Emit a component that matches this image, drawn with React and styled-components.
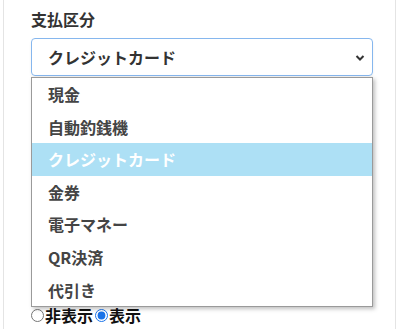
import React, { useState } from "react";
import styled, { createGlobalStyle } from "styled-components";

const GlobalStyle = createGlobalStyle`
  body {
    margin: 0;
    background: #fff;
    font-family: "Noto Sans CJK JP", "Noto Sans", sans-serif;
  }
`;

const Card = styled.div`
  position: relative;
  margin: 0 4px 0 3px;
  padding: 7px 0 0 27px;
  border: 1px solid #e4e4e4;
  border-top: none;
  border-bottom: none;
  height: 100vh;
  overflow: hidden;
  box-sizing: border-box;
`;

const Label = styled.div`
  font-size: 16px;
  font-weight: 700;
  color: #333;
  line-height: 24px;
  margin-bottom: 7px;
`;

const SelectBox = styled.div`
  position: relative;
  width: 342px;
  height: 38px;
  box-sizing: border-box;
  border: 1px solid #86b7ee;
  border-radius: 4px;
  padding-left: 16px;
  display: flex;
  align-items: center;
  font-size: 16px;
  font-weight: 700;
  color: #333;
  box-shadow: 0 2px 3px rgba(0, 0, 0, 0.06);
`;

const Chevron = styled.svg`
  position: absolute;
  right: 7px;
  top: 15px;
`;

const Options = styled.ul`
  position: absolute;
  top: 77px;
  left: 27px;
  width: 342px;
  margin: 0;
  padding: 0;
  list-style: none;
  box-sizing: border-box;
  background: #fff;
  border: 1px solid #9a9a9a;
  box-shadow: 2px 2px 4px rgba(0, 0, 0, 0.25);
  z-index: 2;
`;

const Option = styled.li`
  height: 32.6px;
  line-height: 32px;
  padding-left: 16px;
  font-size: 16px;
  font-weight: 700;
  color: ${(p) => (p.$active ? "#fff" : "#444")};
  background: ${(p) => (p.$active ? "#ade0f5" : "transparent")};
`;

const RadioRow = styled.div`
  margin-top: 229px;
  display: flex;
  align-items: center;
  font-size: 16px;
  font-weight: 700;
  color: #111;
  line-height: 20px;
`;

const Radio = styled.input`
  margin: 0 1px 0 0;
  width: 13px;
  height: 13px;
  accent-color: #1a73e8;
`;

const RadioLabel = styled.label`
  display: flex;
  align-items: center;
  margin-right: 2px;
`;

const items = [
  "現金",
  "自動釣銭機",
  "クレジットカード",
  "金券",
  "電子マネー",
  "QR決済",
  "代引き",
];

function App() {
  const [show, setShow] = useState("show");
  return (
    <>
      <GlobalStyle />
      <Card>
        <Label>支払区分</Label>
        <SelectBox>
          クレジットカード
          <Chevron width="10" height="8" viewBox="0 0 10 8">
            <path
              d="M1.5 2 L5 5.5 L8.5 2"
              fill="none"
              stroke="#333"
              strokeWidth="2"
            />
          </Chevron>
        </SelectBox>
        <Options>
          {items.map((it) => (
            <Option key={it} $active={it === "クレジットカード"}>
              {it}
            </Option>
          ))}
        </Options>
        <RadioRow>
          <RadioLabel>
            <Radio
              type="radio"
              name="disp"
              checked={show === "hide"}
              onChange={() => setShow("hide")}
            />
            非表示
          </RadioLabel>
          <RadioLabel>
            <Radio
              type="radio"
              name="disp"
              checked={show === "show"}
              onChange={() => setShow("show")}
            />
            表示
          </RadioLabel>
        </RadioRow>
      </Card>
    </>
  );
}

export default App;
